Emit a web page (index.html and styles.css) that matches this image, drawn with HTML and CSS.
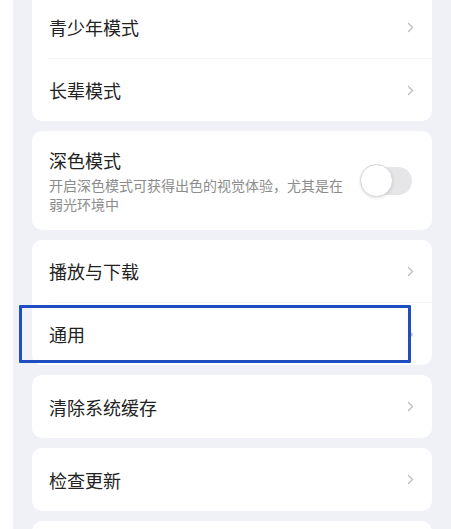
FILE: index.html
```html
<!DOCTYPE html>
<html lang="zh-CN">
<head>
<meta charset="utf-8">
<title>设置</title>
<link rel="stylesheet" href="styles.css">
</head>
<body>
<div class="screen">
  <div class="list">
    <div class="card">
      <div class="row row-first">
        <span class="label">青少年模式</span>
        <svg class="chev" width="7" height="11" viewBox="0 0 7 11"><polyline points="1.5,1.5 5.5,5.5 1.5,9.5" fill="none" stroke="#bdbdbd" stroke-width="1.3" stroke-linecap="round" stroke-linejoin="round"/></svg>
      </div>
      <div class="divider"></div>
      <div class="row">
        <span class="label">长辈模式</span>
        <svg class="chev" width="7" height="11" viewBox="0 0 7 11"><polyline points="1.5,1.5 5.5,5.5 1.5,9.5" fill="none" stroke="#bdbdbd" stroke-width="1.3" stroke-linecap="round" stroke-linejoin="round"/></svg>
      </div>
    </div>

    <div class="card card-dark">
      <div class="dark-text">
        <div class="dark-title">深色模式</div>
        <div class="dark-desc">开启深色模式可获得出色的视觉体验，尤其是在弱光环境中</div>
      </div>
      <div class="toggle">
        <div class="track"></div>
        <div class="knob"></div>
      </div>
    </div>

    <div class="card">
      <div class="row">
        <span class="label">播放与下载</span>
        <svg class="chev" width="7" height="11" viewBox="0 0 7 11"><polyline points="1.5,1.5 5.5,5.5 1.5,9.5" fill="none" stroke="#bdbdbd" stroke-width="1.3" stroke-linecap="round" stroke-linejoin="round"/></svg>
      </div>
      <div class="divider"></div>
      <div class="row">
        <span class="label">通用</span>
        <svg class="chev" width="7" height="11" viewBox="0 0 7 11"><polyline points="1.5,1.5 5.5,5.5 1.5,9.5" fill="none" stroke="#bdbdbd" stroke-width="1.3" stroke-linecap="round" stroke-linejoin="round"/></svg>
        <div class="highlight"></div>
      </div>
    </div>

    <div class="card">
      <div class="row row-single">
        <span class="label">清除系统缓存</span>
        <svg class="chev" width="7" height="11" viewBox="0 0 7 11"><polyline points="1.5,1.5 5.5,5.5 1.5,9.5" fill="none" stroke="#bdbdbd" stroke-width="1.3" stroke-linecap="round" stroke-linejoin="round"/></svg>
      </div>
    </div>

    <div class="card">
      <div class="row row-single">
        <span class="label">检查更新</span>
        <svg class="chev" width="7" height="11" viewBox="0 0 7 11"><polyline points="1.5,1.5 5.5,5.5 1.5,9.5" fill="none" stroke="#bdbdbd" stroke-width="1.3" stroke-linecap="round" stroke-linejoin="round"/></svg>
      </div>
    </div>

    <div class="card">
      <div class="row row-single"></div>
    </div>
  </div>
</div>
</body>
</html>
```

FILE: styles.css
```css
html, body {
  margin: 0;
  padding: 0;
  background: #ffffff;
}

body {
  font-family: "Noto Sans CJK SC", "Noto Sans", sans-serif;
  color: #222222;
}

.screen {
  margin-left: 13px;
  height: 529px;
  overflow: hidden;
  background: #eff1f7;
  padding: 0 19px 0 19px;
}

.list {
  display: flex;
  flex-direction: column;
  gap: 10px;
  margin-top: -14px;
}

.card {
  background: #ffffff;
  border-radius: 10px;
}

.row {
  position: relative;
  height: 62px;
  box-sizing: border-box;
  display: flex;
  align-items: center;
  justify-content: space-between;
  padding: 0 20px 0 17px;
}

.row-first {
  height: 72px;
  padding-top: 10px;
}

.row-single {
  height: 63px;
}

.label {
  font-size: 18px;
  line-height: 24px;
  color: #222222;
}

.chev {
  display: block;
  flex: none;
  margin-right: -2px;
}

.divider {
  height: 1px;
  margin-left: 17px;
  background: #f3f4f6;
}

.card-dark {
  display: flex;
  align-items: center;
  padding: 17px 20px 16px 17px;
}

.dark-text {
  flex: 1;
  min-width: 0;
}

.dark-title {
  font-size: 18px;
  line-height: 24px;
  color: #222222;
}

.dark-desc {
  margin-top: 4px;
  font-size: 14px;
  line-height: 19px;
  color: #8c8c8c;
}

.toggle {
  position: relative;
  flex: none;
  width: 52px;
  height: 34px;
  margin-left: 14px;
}

.track {
  position: absolute;
  left: 6px;
  right: 0;
  top: 3px;
  bottom: 3px;
  border-radius: 14px;
  background: #e6e6e8;
}

.knob {
  position: absolute;
  left: 0;
  top: 0;
  width: 33px;
  height: 33px;
  box-sizing: border-box;
  border-radius: 50%;
  background: #ffffff;
  border: 1px solid #d6d6d6;
  box-shadow: 0 1px 3px rgba(0, 0, 0, 0.12);
}

.highlight {
  position: absolute;
  left: -13px;
  top: 2px;
  width: 392px;
  height: 58px;
  box-sizing: border-box;
  border: 3px solid #1f4ec2;
  border-radius: 1px;
}
```
